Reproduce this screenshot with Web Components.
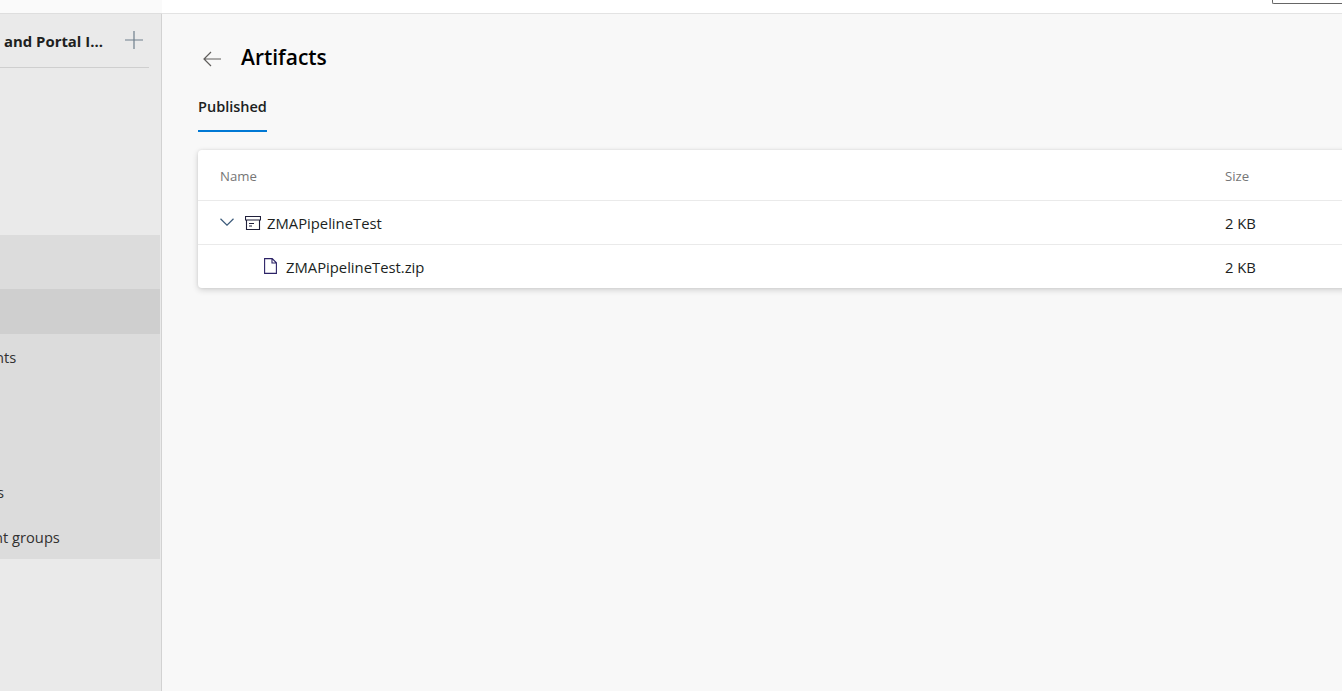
<!DOCTYPE html>
<html lang="en">
<head>
<meta charset="utf-8">
<title>Artifacts</title>
<style>
html,body{margin:0;height:100%;overflow:hidden;background:#f8f8f8}
body{font-family:"Open Sans","Liberation Sans",sans-serif;color:#201f1e}
</style>
</head>
<body>
<app-shell>
  <side-nav slot="nav" heading="and Portal I...">
    <nav-row tall></nav-row>
    <nav-row selected></nav-row>
    <nav-row clip="5">nts</nav-row>
    <nav-row></nav-row>
    <nav-row></nav-row>
    <nav-row clip="3">s</nav-row>
    <nav-row clip="6">nt groups</nav-row>
  </side-nav>
  <artifacts-page heading="Artifacts" tab="Published">
    <artifact-table>
      <artifact-row kind="folder" name="ZMAPipelineTest" size="2 KB"></artifact-row>
      <artifact-row kind="file" name="ZMAPipelineTest.zip" size="2 KB"></artifact-row>
    </artifact-table>
  </artifacts-page>
</app-shell>
<script>
function def(name, html, init){
  customElements.define(name, class extends HTMLElement{
    constructor(){super();this.attachShadow({mode:'open'}).innerHTML=html;}
    connectedCallback(){init&&init(this,this.shadowRoot);}
  });
}
def('app-shell',`<style>
:host{display:grid;grid-template-columns:162px 1fr;grid-template-rows:14px 1fr;height:691px;width:1342px;overflow:hidden}
.tl{background:#fafafa;border-bottom:1px solid #dedede}
.tr{background:#fff;border-bottom:1px solid #e3e3e3;display:flex;justify-content:flex-end;align-items:flex-start}
.box{width:69px;height:3px;border:1px solid #666;border-top:0;border-right:0;border-radius:0 0 0 2px}
main{min-width:0;overflow:hidden}
</style>
<div class="tl"></div><div class="tr"><div class="box"></div></div>
<slot name="nav"></slot><main><slot></slot></main>`);
def('side-nav',`<style>
:host{display:block;background:#eaeaea;border-right:1px solid #d2d2d2;box-sizing:border-box;overflow:hidden}
header{display:flex;align-items:center;justify-content:space-between;box-sizing:border-box;height:54px;width:149px;padding:0 5px 0 4px;border-bottom:1px solid #cfcfcf;font-weight:700;font-size:14.9px;color:#201f1e}
svg{display:block;flex:none;margin-top:-2px}
.list{margin:167px 1px 0 0;background:#dcdcdc}
</style>
<header><span id="h"></span><svg width="20" height="20" viewBox="0 0 20 20" fill="none" stroke="#6f7f8c" stroke-width="1.2"><path d="M10 1v18M1 10h18"/></svg></header>
<div class="list"><slot></slot></div>`,(e,s)=>{s.getElementById('h').textContent=e.getAttribute('heading')});
def('nav-row',`<style>
:host{display:flex;align-items:center;height:45px;font-size:14.7px;color:#323130;white-space:nowrap;overflow:hidden}
:host([tall]){height:54px}
:host([selected]){background:#cfcfcf}
span{display:block;padding-top:1px}
</style><span id="t"><slot></slot></span>`,(e,s)=>{s.getElementById('t').style.marginLeft='-'+(e.getAttribute('clip')||0)+'px'});
def('artifacts-page',`<style>
:host{display:block;padding:0 0 0 36px}
.title{display:flex;align-items:center;height:42px;margin-top:22px;gap:20px}
svg{display:block;margin:4px 0 0 5px}
h1{margin:0;font-size:21px;font-weight:600;color:#000;line-height:32px}
.tabs{display:flex;margin-top:7px}
.tab{font-size:14.5px;font-weight:600;color:#201f1e;height:47px;box-sizing:border-box;padding-top:12px;border-bottom:2px solid #0078d4}
.body{margin-top:18px;margin-right:-30px}
</style>
<div class="title"><svg width="18" height="16" viewBox="0 0 18 16" fill="none" stroke="#605e5c" stroke-width="1.2"><path d="M18 8H1M8 1 1 8l7 7"/></svg><h1 id="h"></h1></div>
<div class="tabs"><div class="tab" id="t"></div></div>
<div class="body"><slot></slot></div>`,(e,s)=>{s.getElementById('h').textContent=e.getAttribute('heading');s.getElementById('t').textContent=e.getAttribute('tab')});
const cols='grid-template-columns:1005px 1fr;';
def('artifact-table',`<style>
:host{display:block;background:#fff;border-radius:4px;box-shadow:0 2px 6px rgba(0,0,0,.16),0 0 3px rgba(0,0,0,.08)}
.head{display:grid;${cols}align-items:center;height:51px;box-sizing:border-box;padding:1px 0 0 22px;border-bottom:1px solid #eaeaea;font-size:13.2px;color:#767676}
</style><div class="head"><span>Name</span><span>Size</span></div><slot></slot>`);
const folder=`<svg class="chev" width="14" height="8" viewBox="0 0 14 8" fill="none" stroke="#3b5a7a" stroke-width="1.2"><path d="M.5.8 7 7.2 13.5.8"/></svg><svg class="ic" width="16" height="14" viewBox="0 0 16 14" fill="none" stroke="#1f1f3a" stroke-width="1.1"><path d="M.5.5h15v3.5H.5zM1.5 4v9.5h13V4M4 7.5h5M4 10h3"/></svg>`;
const file=`<svg class="fi" width="13" height="16" viewBox="0 0 13 16" fill="none" stroke="#2b2266" stroke-width="1.1"><path d="M.6.6h7.6l4.2 4.2v10.6H.6zM8 .6v4.4h4.4"/></svg>`;
def('artifact-row',`<style>
:host{display:grid;${cols}align-items:center;height:44px;box-sizing:border-box;padding:1px 0 0 22px;font-size:14.8px;color:#201f1e;border-bottom:1px solid #eaeaea}
:host(:last-child){border-bottom:0;height:43px}
.n{display:flex;align-items:center}
svg{display:block;flex:none}
.chev{margin:-3px 11px 0 0}
.ic{margin:-1px 6px 0 0}
.fi{margin:-3px 9px 0 44px}
</style><div class="n" id="n"></div><div id="s"></div>`,(e,s)=>{
  const k=e.getAttribute('kind');
  s.getElementById('n').innerHTML=(k==='folder'?folder:file)+'<span id="l"></span>';
  s.getElementById('l').textContent=e.getAttribute('name');
  s.getElementById('s').textContent=e.getAttribute('size');
});
</script>
</body>
</html>
